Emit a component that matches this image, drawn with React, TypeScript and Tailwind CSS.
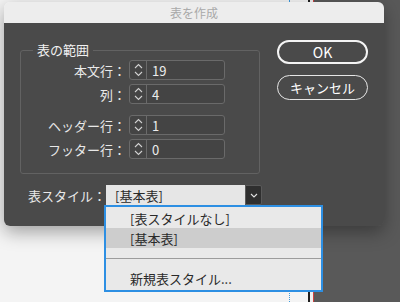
import React from "react";

const font = { fontFamily: '"Noto Sans CJK JP", "Noto Sans", "Liberation Sans", sans-serif' };

function Spinner({ value }: { value: string }) {
  return (
    <div className="ml-[3px] flex h-[20px] w-[96px] shrink-0 rounded-[3px] border border-[#6a6a6a] bg-[#444444]">
      <div className="flex w-[17px] flex-col items-center justify-center gap-[2px] border-r border-[#6a6a6a]">
        <svg width="9" height="6" viewBox="0 0 9 6">
          <path d="M1 5 L4.5 1.5 L8 5" fill="none" stroke="#d0d0d0" strokeWidth="1.1" />
        </svg>
        <svg width="9" height="6" viewBox="0 0 9 6">
          <path d="M1 1 L4.5 4.5 L8 1" fill="none" stroke="#d0d0d0" strokeWidth="1.1" />
        </svg>
      </div>
      <div className="flex items-center pl-[5px] text-[13px] leading-none text-[#ececec]">{value}</div>
    </div>
  );
}

function Row({ label, value, className = "" }: { label: string; value: string; className?: string }) {
  return (
    <div className={`flex h-[20px] items-center ${className}`}>
      <div className="w-[93px] shrink-0 whitespace-nowrap text-right text-[13px] leading-none text-[#e8e8e8]">{label}</div>
      <Spinner value={value} />
    </div>
  );
}

export default function App() {
  return (
    <div className="relative h-[302px] w-[400px] overflow-hidden" style={font}>
      {/* background canvas */}
      <div className="flex h-full w-full">
        <div className="h-full w-[290px] border-r border-dotted border-[#3a9ae0] bg-[#f4f4f4]" />
        <div className="h-full w-[18px] bg-[#f4f4f4]" />
        <div className="h-full w-[2px] bg-[#1e1e1e]" />
        <div className="h-full w-[3px] bg-[#f0f0f0]" />
        <div className="h-full w-[1px] bg-[#d0403f]" />
        <div className="h-full flex-1 bg-[#595959]" />
      </div>

      {/* dialog */}
      <div className="absolute left-[4px] top-[2px] flex h-[224px] w-[380px] flex-col overflow-hidden rounded-[6px] shadow-[0_6px_18px_rgba(0,0,0,0.35)]">
        <div className="flex h-[21px] items-center justify-center bg-[#ededed] text-[12px] text-[#a9a9a9]">
          表を作成
        </div>
        <div className="flex flex-1 bg-[#4a4a4a]">
          <div className="ml-[16px] mt-[18px] w-[240px] shrink-0">
            <fieldset className="rounded-[3px] border border-[#626262] pb-[14px] pl-[12px] pt-[1px]">
              <legend className="px-[4px] text-[13px] leading-[18px] text-[#f2f2f2]">表の範囲</legend>
              <Row label="本文行：" value="19" />
              <Row label="列：" value="4" className="mt-[4px]" />
              <Row label="ヘッダー行：" value="1" className="mt-[11px]" />
              <Row label="フッター行：" value="0" className="mt-[4px]" />
            </fieldset>
            <div className="mt-[11px] flex h-[20px] items-center pl-[8px]">
              <div className="shrink-0 whitespace-nowrap text-[13px] leading-none text-[#e8e8e8]">表スタイル：</div>
              <div className="ml-auto flex h-[20px] w-[156px] shrink-0">
                <div className="flex flex-1 items-center bg-[#e6e6e6] pl-[9px] text-[13px] leading-none text-[#2a2a2a]">
                  [基本表]
                </div>
                <div className="flex w-[17px] items-center justify-center rounded-r-[2px] border border-[#5a5a5a] bg-[#2f2f2f]">
                  <svg width="8" height="5" viewBox="0 0 8 5">
                    <path d="M1 1 L4 4 L7 1" fill="none" stroke="#e0e0e0" strokeWidth="1.1" />
                  </svg>
                </div>
              </div>
            </div>
          </div>
          <div className="ml-[17px] mt-[17px] flex w-[91px] shrink-0 flex-col">
            <div className="flex h-[24px] items-center justify-center rounded-full border-2 border-[#f4f4f4] text-[14px] leading-none text-white">
              OK
            </div>
            <div className="mt-[11px] flex h-[25px] items-center justify-center rounded-full border-[1.5px] border-[#e6e6e6] text-[13px] leading-none text-white">
              キャンセル
            </div>
          </div>
        </div>
      </div>

      {/* popup menu */}
      <div className="absolute left-[104px] top-[205px] flex w-[219px] flex-col border-2 border-[#2d8fe3] bg-[#e9e9e9] pb-[2px] pt-[1px] text-[13px] leading-none text-[#2a2a2a]">
        <div className="flex h-[20px] items-center pl-[24px]">[表スタイルなし]</div>
        <div className="flex h-[20px] items-center bg-[#cdcdcd] pl-[24px]">[基本表]</div>
        <div className="flex h-[20px] items-center">
          <div className="h-[1px] w-full bg-[#9c9c9c]" />
        </div>
        <div className="flex h-[20px] items-center pl-[24px]">新規表スタイル...</div>
      </div>
    </div>
  );
}
